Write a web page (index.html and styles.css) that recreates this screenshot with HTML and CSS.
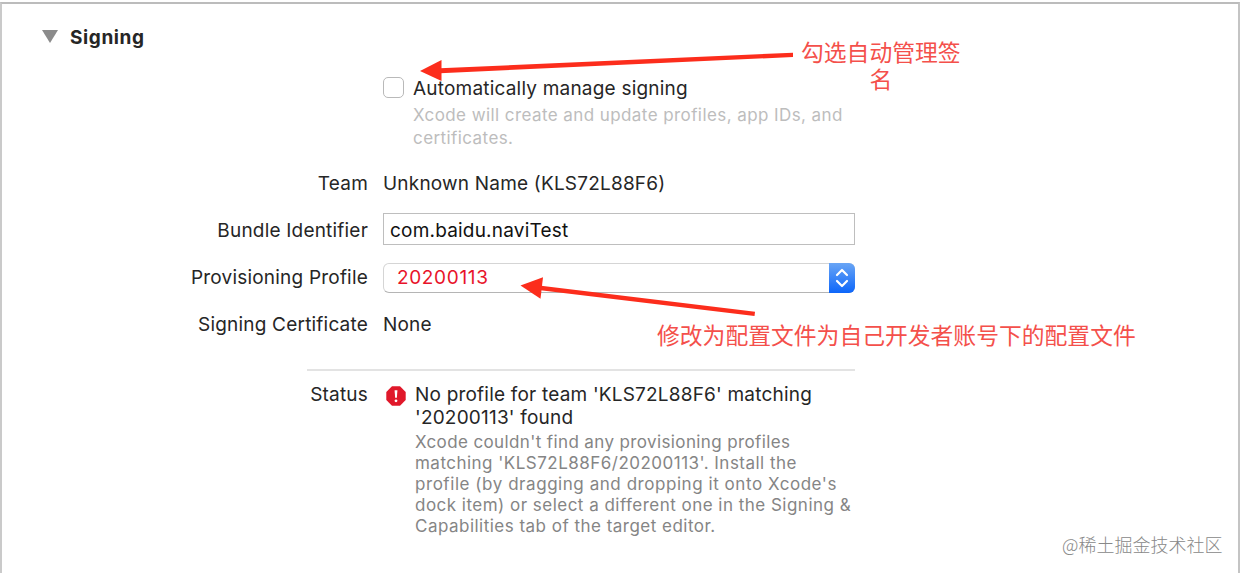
FILE: index.html
```html
<!DOCTYPE html>
<html lang="en">
<head>
    <meta charset="UTF-8">
    <meta name="viewport" content="width=device-width, initial-scale=1.0">
    <title>Signing</title>
    <link rel="stylesheet" href="styles.css">
</head>
<body>

    <main class="panel">
        <h2 class="section-title">
            <svg class="triangle" width="16" height="13" viewBox="0 0 16 13"><path d="M0 0H16L8 13Z" fill="#8b8b8b"/></svg>
            Signing
        </h2>

        <form class="settings">
            <div class="row row-auto">
                <span class="checkbox"></span>
                <div>
                    <div class="value">Automatically manage signing</div>
                    <p class="hint">Xcode will create and update profiles, app IDs, and<br>certificates.</p>
                </div>
            </div>

            <div class="row row-team">
                <span class="label">Team</span>
                <span class="value">Unknown Name (KLS72L88F6)</span>
            </div>

            <div class="row row-bundle">
                <span class="label">Bundle Identifier</span>
                <div class="textfield">com.baidu.naviTest</div>
            </div>

            <div class="row row-profile">
                <span class="label">Provisioning Profile</span>
                <div class="popup">
                    <span class="popup-text">20200113</span>
                    <span class="stepper">
                        <svg width="26" height="30" viewBox="0 0 26 30" fill="none" stroke="#fff" stroke-width="2.2" stroke-linecap="round" stroke-linejoin="round">
                            <path d="M8 12L13 7L18 12"/>
                            <path d="M8 18L13 23L18 18"/>
                        </svg>
                    </span>
                </div>
            </div>

            <div class="row row-cert">
                <span class="label">Signing Certificate</span>
                <span class="value">None</span>
            </div>

            <hr class="divider">

            <div class="row row-status">
                <span class="label">Status</span>
                <div class="status">
                    <svg class="error-icon" width="20" height="20" viewBox="0 0 20 20">
                        <path d="M6 0.3H14L19.7 6V14L14 19.7H6L0.3 14V6Z" fill="#e0182a"/>
                        <path d="M8.6 4.3H11.4L10.9 11.8H9.1Z" fill="#fff"/>
                        <circle cx="10" cy="14.8" r="1.4" fill="#fff"/>
                    </svg>
                    <div>
                        <p class="message">No profile for team 'KLS72L88F6' matching<br>'20200113' found</p>
                        <p class="details">
                            Xcode couldn't find any provisioning profiles<br>
                            <span class="wide">matching 'KLS72L88F6/20200113'. Install the</span><br>
                            <span class="wider">profile (by dragging and dropping it onto Xcode's</span><br>
                            <span class="wide">dock item) or select a different one in the Signing &amp;</span><br>
                            <span class="wide">Capabilities tab of the target editor.</span>
                        </p>
                    </div>
                </div>
            </div>
        </form>
    </main>

    <!-- annotations over the form -->
    <svg class="arrows" width="1240" height="573" viewBox="0 0 1240 573">
        <g fill="#fc2d1c">
            <path d="M420 71L441.5 60V81Z"/>
            <path d="M440 68.3L793 52.7V57L440 73.2Z"/>
            <path d="M520.5 285.5L543 277.3L540.5 298.7Z"/>
            <path d="M541 285.7L755 311.8L754.5 316L540.5 290.3Z"/>
        </g>
    </svg>
    <div class="note note-auto">勾选自动管理签<br>名</div>
    <div class="note note-profile">修改为配置文件为自己开发者账号下的配置文件</div>
    <div class="watermark">@稀土掘金技术社区</div>

</body>
</html>
```

FILE: styles.css
```css
* {
    box-sizing: border-box;
}

body {
    margin: 0;
    padding-top: 2px;
    background: #fff;
    font-family: Inter, "Noto Sans CJK SC", sans-serif;
    font-size: 19px;
    line-height: 24px;
    letter-spacing: 0.2px;
    color: #262626;
    white-space: nowrap;
}

p, h2 {
    margin: 0;
}

.panel {
    height: 571px;
    border-top: 2px solid #bcbcbc;
    border-left: 2px solid #cacaca;
    border-right: 2px solid #c4c4c4;
}

.section-title {
    display: flex;
    align-items: center;
    gap: 12px;
    padding: 22px 0 0 40px;
    font-size: 19px;
    font-weight: 700;
    line-height: 24px;
    letter-spacing: 0.6px;
}

.triangle {
    margin-top: -3px;
}

.settings {
    width: 853px;
    padding-top: 27px;
}

.row {
    display: grid;
    grid-template-columns: 366px 472px;
    column-gap: 15px;
    align-items: center;
}

.label {
    text-align: right;
}

.row-auto {
    grid-template-columns: 21px 1fr;
    column-gap: 9px;
    align-items: start;
    padding-left: 381px;
}

.checkbox {
    width: 21px;
    height: 21px;
    border: 1.5px solid #b9b9b9;
    border-radius: 5px;
}

.hint {
    padding-top: 3px;
    font-size: 17px;
    line-height: 23px;
    letter-spacing: 0.42px;
    color: #bdbdbd;
}

.row-team {
    height: 24px;
    margin-top: 22px;
}

.row-bundle {
    height: 32px;
    margin-top: 17px;
}

.row-bundle .label {
    padding-top: 3px;
}

.textfield {
    height: 32px;
    padding: 5px 6px;
    border: 1px solid #bebebe;
    color: #111;
}

.row-profile {
    height: 30px;
    margin-top: 18px;
}

.popup {
    display: flex;
    justify-content: space-between;
    height: 30px;
    padding-left: 13px;
    border: 1px solid #d5d5d5;
    border-bottom-color: #b5b5b5;
    border-radius: 6px;
    line-height: 28px;
    color: #e8132a;
}

.popup-text {
    letter-spacing: 0.65px;
}

.stepper {
    width: 26px;
    height: 30px;
    margin: -1px -1px 0 0;
    border-radius: 0 6px 6px 0;
    background: linear-gradient(#69a5f5, #0d66fa);
}

.stepper svg {
    display: block;
}

.row-cert {
    height: 24px;
    margin-top: 20px;
}

.divider {
    height: 2px;
    margin: 32px 0 0 305px;
    border: 0;
    background: #e3e3e3;
}

.row-status {
    align-items: start;
    margin-top: 12px;
}

.status {
    display: flex;
    gap: 9px;
    padding-left: 3px;
}

.error-icon {
    flex: none;
    margin-top: 3px;
}

.message {
    line-height: 23px;
}

.details {
    padding-top: 3px;
    font-size: 17px;
    line-height: 21.1px;
    letter-spacing: 0.38px;
    color: #858585;
}

.wide {
    letter-spacing: 0.48px;
}

.wider {
    letter-spacing: 0.55px;
}

.arrows {
    position: absolute;
    top: 0;
    left: 0;
}

.note {
    position: absolute;
    font-family: "Liberation Sans", "Noto Sans CJK SC", sans-serif;
    font-size: 22.8px;
    line-height: 27px;
    letter-spacing: 0;
    text-align: center;
    color: #f4504b;
}

.note-auto {
    top: 40px;
    left: 801px;
}

.note-profile {
    top: 323px;
    left: 657px;
}

.watermark {
    position: absolute;
    top: 532px;
    left: 1062px;
    font-family: "Noto Sans CJK SC", sans-serif;
    font-weight: 300;
    font-size: 18px;
    letter-spacing: 0;
    color: #888;
}
```
